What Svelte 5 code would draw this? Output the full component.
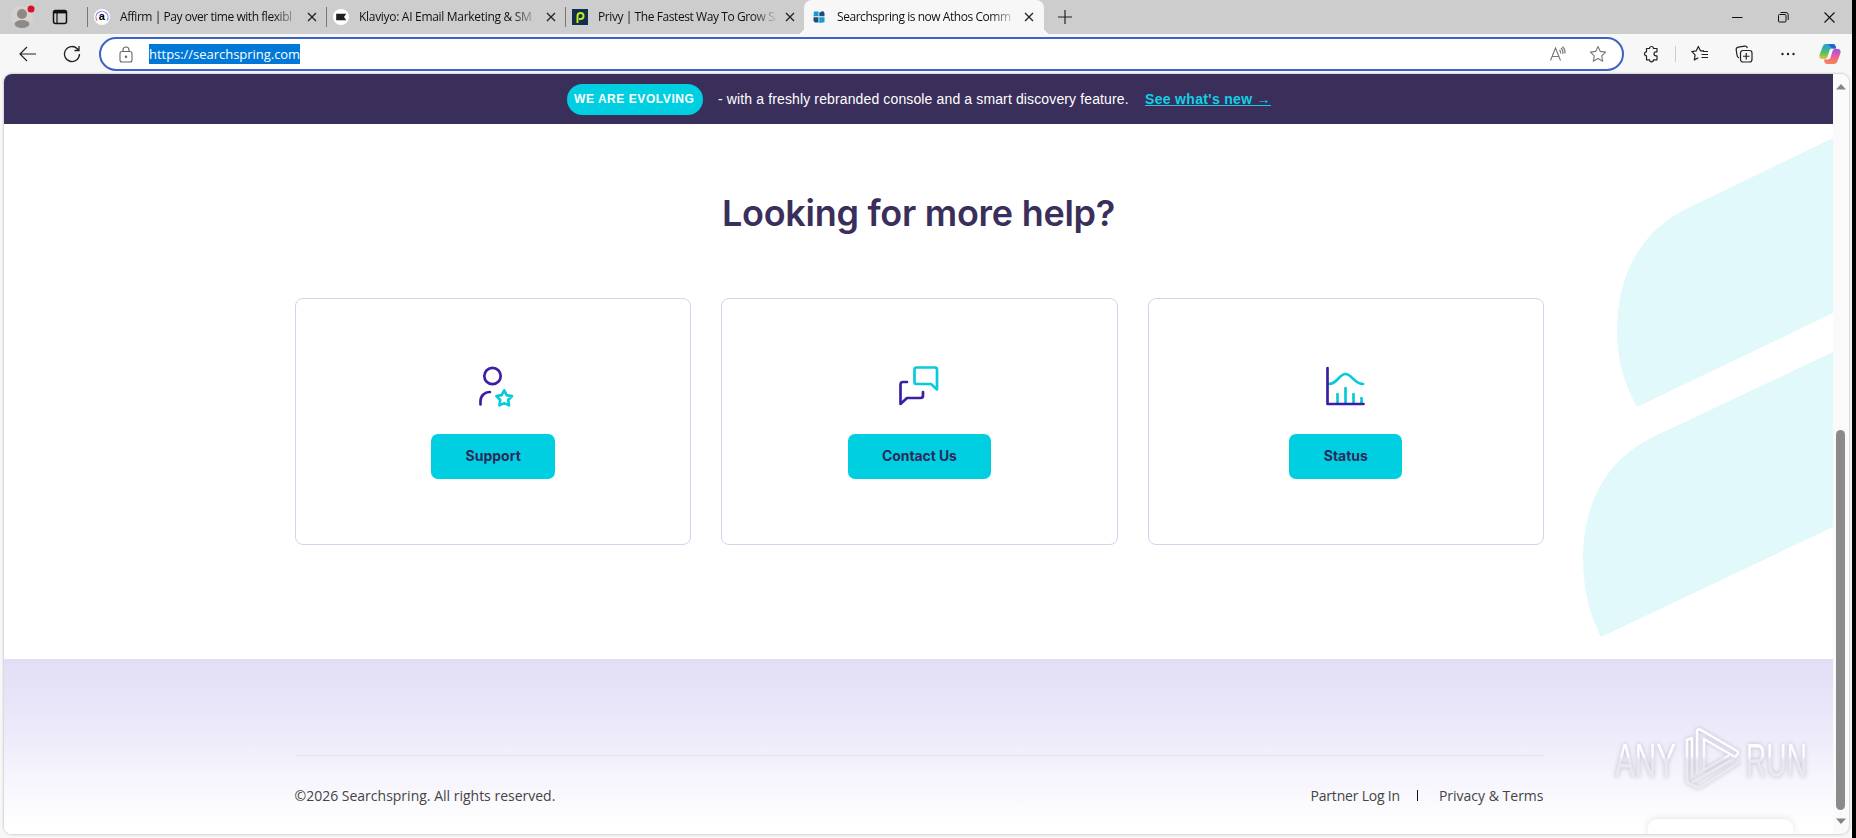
<script lang="ts">
  interface Tab {
    id: string;
    title: string;
    active?: boolean;
  }

  const tabs: Tab[] = [
    { id: "affirm", title: "Affirm | Pay over time with flexibl" },
    { id: "klaviyo", title: "Klaviyo: AI Email Marketing & SM" },
    { id: "privy", title: "Privy | The Fastest Way To Grow Sa" },
    { id: "searchspring", title: "Searchspring is now Athos Comm", active: true },
  ];

  const cards = [
    { id: "support", label: "Support" },
    { id: "contact", label: "Contact Us" },
    { id: "status", label: "Status" },
  ];
</script>

<div class="browser">
  <!-- Tab strip -->
  <header class="tabstrip">
    <div class="profile">
      <svg width="26" height="28" viewBox="0 0 26 28">
        <circle cx="11" cy="14" r="11" fill="#d6d2d0" />
        <circle cx="11" cy="11" r="5" fill="#8f8985" />
        <ellipse cx="11" cy="21" rx="7.5" ry="4" fill="#8f8985" />
        <circle cx="20" cy="6" r="3.5" fill="#d90f24" />
      </svg>
      <svg width="16" height="16" viewBox="0 0 16 16" fill="none" stroke="#111" stroke-width="1.5">
        <rect x="1.5" y="1.5" width="13" height="13" rx="2" />
        <path d="M2 3.2h12" stroke-width="2.4" />
        <path d="M5 4v10" stroke-width="1.2" />
      </svg>
    </div>

    {#each tabs as tab (tab.id)}
      <div class="tab" class:active={tab.active}>
        <span class="favicon">
          {#if tab.id === "affirm"}
            <svg width="16" height="16" viewBox="0 0 16 16">
              <circle cx="8" cy="8" r="8" fill="#fff" />
              <path d="M3 11.500A6 6 0 1 1 13 11.500" fill="none" stroke="#7a7ae8" stroke-width="1.100" />
              <text x="4.700" y="11" class="favicon-a">a</text>
            </svg>
          {:else if tab.id === "klaviyo"}
            <svg width="16" height="16" viewBox="0 0 16 16">
              <circle cx="8" cy="8" r="8" fill="#fff" />
              <path d="M3.200 4.800h10L11 8l2.200 3.200h-10z" fill="#1f1f1f" />
            </svg>
          {:else if tab.id === "privy"}
            <svg width="16" height="16" viewBox="0 0 16 16">
              <rect width="16" height="16" fill="#12304a" />
              <path d="M5.500 14V7A3 3 0 1 1 8.500 10H7" fill="none" stroke="#c3ea1f" stroke-width="2" />
            </svg>
          {:else}
            <svg width="14" height="14" viewBox="0 0 14 14">
              <path d="M2 1.500h4.500v4.700H1.500z" fill="#1299d6" />
              <path d="M7.300 2.500L11 1l1.500 2v3.200H7.300z" fill="#234a7d" />
              <path d="M1.500 7.300h5v5.200H3L1.500 11z" fill="#234a7d" />
              <path d="M7.300 7.300h5.200v5L7.300 13z" fill="#1299d6" />
            </svg>
          {/if}
        </span>
        <span class="tab-title {tab.id}">{tab.title}</span>
        <svg class="tab-close" width="10" height="10" viewBox="0 0 10 10">
          <path d="M1 1l8 8M9 1l-8 8" stroke="#222" stroke-width="1.3" />
        </svg>
      </div>
    {/each}

    <svg class="new-tab" width="14" height="14" viewBox="0 0 14 14">
      <path d="M7 0v14M0 7h14" stroke="#222" stroke-width="1.2" />
    </svg>

    <div class="window-controls">
      <svg width="11" height="11" viewBox="0 0 11 11"><path d="M0 5.500h10.500" stroke="#111" /></svg>
      <svg width="11" height="11" viewBox="0 0 11 11" fill="none" stroke="#111">
        <rect x="0.500" y="2.500" width="7.500" height="7.500" rx="1" />
        <path d="M2.500.5h5.500a2.200 2.200 0 0 1 2.200 2.200v5.300" />
      </svg>
      <svg width="11" height="11" viewBox="0 0 11 11"><path d="M.5.5l10 10M10.500.5l-10 10" stroke="#111" stroke-width="1.100" /></svg>
    </div>
  </header>

  <!-- Toolbar -->
  <div class="toolbar">
    <div class="nav-buttons">
      <svg width="18" height="16" viewBox="0 0 18 16" fill="none" stroke="#222" stroke-width="1.200">
        <path d="M17 8H1.500M8 1L1 8l7 7" />
      </svg>
      <svg width="18" height="18" viewBox="0 0 18 18" fill="none" stroke="#222" stroke-width="1.300">
        <path d="M16.500 9A7.500 7.500 0 1 1 14.300 3.700L16 5.500M16 1v4.500h-4.500" />
      </svg>
    </div>

    <div class="address">
      <svg class="lock" width="14" height="17" viewBox="0 0 14 17" fill="none" stroke="#666" stroke-width="1.100">
        <rect x="1" y="5.500" width="12" height="10.500" rx="2" />
        <path d="M4 5.500V4a3 3 0 0 1 6 0v1.500" />
        <circle cx="7" cy="10.700" r=".7" fill="#555" />
      </svg>
      <span class="url">https://searchspring.com</span>
      <svg class="read-aloud" width="18" height="16" viewBox="0 0 18 16" fill="none" stroke="#777" stroke-width="1.100">
        <path d="M1.500 14.500L6.500 2l5 12.500M3 10.500h7M10.500 4q1.500 1.500 1 3.500M12 2q2.500 2.500 1.800 6M13.500.5q3 3 2.500 7" />
      </svg>
      <svg class="star" width="18" height="18" viewBox="0 0 18 18" fill="none" stroke="#777" stroke-width="1.100" stroke-linejoin="round">
        <path d="M9 1.500l2.300 4.900 5.300.7-3.900 3.700 1 5.400L9 13.600l-4.700 2.600 1-5.400L1.400 7.100l5.300-.7z" />
      </svg>
    </div>

    <div class="tools">
      <svg width="18" height="18" viewBox="0 0 18 18" fill="none" stroke="#222" stroke-width="1.200" stroke-linejoin="round">
        <path d="M4.500 3.500h3a2 2 0 0 1 4 0H15v3.300h-1a2 2 0 0 0 0 4h1v4h-3.500a2 2 0 0 1-4 0h-3v-4a2 2 0 1 1 0-4z" />
      </svg>
      <span class="tools-divider"></span>
      <svg width="18" height="18" viewBox="0 0 18 18" fill="none" stroke="#222" stroke-width="1.200" stroke-linejoin="round">
        <path d="M13 5.800H9.500L7.300 1.500 5.200 5.900.8 6.600l3.300 3.300-.8 5 4-2.200M12 6.500h5M10.500 9.500h6.500M10.500 12.500h6.500" />
      </svg>
      <svg width="18" height="18" viewBox="0 0 18 18" fill="none" stroke="#222" stroke-width="1.200">
        <rect x="5.500" y="5.500" width="11.500" height="11.500" rx="2.500" />
        <path d="M11.250 8v6.500M8 11.250h6.500M4 13l-.8-.6a3 3 0 0 1-1.100-2L1.200 5a2.500 2.500 0 0 1 2-2.800l6.500-1a2.500 2.500 0 0 1 2.700 1.900" />
      </svg>
      <svg width="18" height="18" viewBox="0 0 18 18" fill="#222">
        <circle cx="3.500" cy="9" r="1.200" /><circle cx="9" cy="9" r="1.200" /><circle cx="14.500" cy="9" r="1.200" />
      </svg>
      <svg class="copilot" width="22" height="22" viewBox="0 0 22 22">
        <defs>
          <linearGradient id="cp-left" x1="0" y1="0" x2="0" y2="1">
            <stop offset="0" stop-color="#1c9fe0" /><stop offset=".6" stop-color="#58bd6b" /><stop offset="1" stop-color="#f2c322" />
          </linearGradient>
          <linearGradient id="cp-right" x1="0" y1="0" x2="0" y2="1">
            <stop offset="0" stop-color="#a252e0" /><stop offset=".5" stop-color="#ef5b9c" /><stop offset="1" stop-color="#f58a4b" />
          </linearGradient>
        </defs>
        <path d="M7 1h7q2 0 2.500 2l.7 2.500H13q-2 0-2.600 2L8.500 14q-.6 2-2.500 2H3q-3 0-2.500-4L3.500 4Q4.500 1 7 1z" fill="url(#cp-left)" />
        <path d="M15 21H8q-2 0-2.500-2L5 16.500h4q2 0 2.600-2l1.900-6.500q.6-2 2.500-2h3q3 0 2.500 4l-3 8q-1 3-3.500 3z" fill="url(#cp-right)" />
        <path d="M9 1h5q2 0 2.500 2l.7 2.500H13z" fill="#2264d1" />
      </svg>
    </div>
  </div>

  <!-- Web page -->
  <div class="viewport">
    <div class="page">
      <div class="banner">
        <span class="pill">WE ARE EVOLVING</span>
        <span class="banner-text">- with a freshly rebranded console and a smart discovery feature.</span>
        <a class="banner-link" href="#new">See what's new →</a>
      </div>

      <main class="help">
        <svg class="leaves" width="252" height="500" viewBox="0 0 252 500" fill="#e2f9fb">
          <path d="M252 0L107 70C52 96 36 148 36 193Q36 234 56 269L252 175z" />
          <path d="M252 214L74 298C18 324 2 376 2 421Q2 464 20 499L252 389z" />
        </svg>

        <h1>Looking for more help?</h1>
        <div class="cards">
          {#each cards as card (card.id)}
            <section class="card">
              <svg class="card-icon" width="42" height="42" viewBox="0 0 42 42" fill="none" stroke-width="2.700" stroke-linecap="round" stroke-linejoin="round">
                {#if card.id === "support"}
                  <circle cx="20.500" cy="11" r="8.200" stroke="#3c1fa3" />
                  <path d="M8.500 39.500V36a9 9 0 0 1 9.500-9" stroke="#3c1fa3" />
                  <path d="M32.200 25.300l2.500 4.900 5.300.9-3.800 3.900.8 5.400-4.800-2.300-4.800 2.300.8-5.400-3.800-3.900 5.300-.9z" stroke="#09cbd8" />
                {:else if card.id === "contact"}
                  <path d="M18.500 2.500H37a2 2 0 0 1 2 2V24.500L33 19H18.500a2 2 0 0 1-2-2V4.500a2 2 0 0 1 2-2z" stroke="#09cbd8" />
                  <path d="M9 17H5a2.500 2.500 0 0 0-2.500 2.500V39l6.500-6H22.500a2.500 2.500 0 0 0 2.500-2.500V27" stroke="#3c1fa3" />
                {:else}
                  <path d="M4 19C12.500 19 14 9 20.500 9s8.500 10 17.500 10M12.500 38V29M20.500 38V23M28.500 38V29M36.500 38v-5" stroke="#09cbd8" />
                  <path d="M2.500 3v36h36" stroke="#3c1fa3" />
                {/if}
              </svg>
              <button class="card-button {card.id}">{card.label}</button>
            </section>
          {/each}
        </div>
      </main>

      <footer class="footer">
        <div class="footer-inner">
          <span class="copyright">©2026 Searchspring. All rights reserved.</span>
          <nav class="footer-links">
            <span class="partner">Partner Log In</span>
            <span class="bar"></span>
            <span class="privacy">Privacy &amp; Terms</span>
          </nav>
        </div>
      </footer>

      <div class="chat-popup"></div>
    </div>

    <div class="scrollbar">
      <svg width="10" height="6" viewBox="0 0 10 6"><path d="M0 5.500L5 0l5 5.500z" fill="#858585" /></svg>
      <div class="scroll-track"><div class="scroll-thumb"></div></div>
      <svg width="10" height="6" viewBox="0 0 10 6"><path d="M0 .5L5 6l5-5.500z" fill="#858585" /></svg>
    </div>
  </div>

  <!-- Watermark over the page -->
  <svg class="watermark" width="204" height="70" viewBox="0 0 204 70">
    <defs>
      <linearGradient id="wm" gradientUnits="userSpaceOnUse" x1="0" y1="4" x2="0" y2="64">
        <stop offset="0" stop-color="#fff" />
        <stop offset=".47" stop-color="#fcfbff" />
        <stop offset=".53" stop-color="#e9e8ef" />
        <stop offset="1" stop-color="#ebeaf0" />
      </linearGradient>
    </defs>
    <text x="3" y="53" textLength="61" lengthAdjust="spacingAndGlyphs">ANY</text>
    <text x="134" y="53" textLength="61" lengthAdjust="spacingAndGlyphs">RUN</text>
    <g fill="none" stroke="url(#wm)" stroke-width="2.600" stroke-linejoin="round" stroke-linecap="round">
      <path d="M85 49V7q1-3 4-1l36 21q2 2 0 4l-2 2-31-18v31l24-14" />
      <path d="M126 36v3L90 62q-3 2-6 1l-9-5V16l5-2v39M81 58l37-21" />
    </g>
  </svg>
</div>

<style>
  :global(body) {
    margin: 0;
    background: #000;
  }

  .browser {
    position: relative;
    box-sizing: border-box;
    width: 1856px;
    height: 838px;
    overflow: hidden;
    display: flex;
    flex-direction: column;
    background: #f7f7f7;
    border-right: 4px solid #000;
    font-family: "Open Sans", "Noto Sans", sans-serif;
  }

  svg {
    display: block;
    flex: none;
  }

  /* Tab strip */
  .tabstrip {
    flex: none;
    height: 34px;
    display: flex;
    align-items: center;
    background: #cdcdcd;
  }

  .profile {
    box-sizing: border-box;
    width: 87px;
    height: 34px;
    display: flex;
    align-items: center;
    gap: 15px;
    padding-left: 11px;
  }

  .tab {
    box-sizing: border-box;
    width: 239px;
    height: 20px;
    display: flex;
    align-items: center;
    padding-left: 5px;
    border-left: 1px solid #777;
  }

  .tab.active {
    position: relative;
    width: 240px;
    height: 34px;
    padding-left: 6px;
    border-left: 0;
    border-radius: 8px 8px 0 0;
    background: #f7f7f7;
  }

  .tab.active::before,
  .tab.active::after {
    content: "";
    position: absolute;
    bottom: 0;
    width: 7px;
    height: 7px;
  }

  .tab.active::before {
    left: -7px;
    background: radial-gradient(circle at 0 0, transparent 7px, #f7f7f7 7px);
  }

  .tab.active::after {
    right: -7px;
    background: radial-gradient(circle at 100% 0, transparent 7px, #f7f7f7 7px);
  }

  .favicon {
    width: 18px;
    display: flex;
    justify-content: center;
  }

  .favicon-a {
    font: bold 11px "Liberation Sans", sans-serif;
  }

  .tab-title {
    width: 178px;
    margin-left: 9px;
    white-space: nowrap;
    font-size: 12px;
    line-height: 18px;
    letter-spacing: -0.45px;
    color: #111;
    mask-image: linear-gradient(to right, #000 154px, transparent 180px);
  }

  .tab-title.klaviyo {
    letter-spacing: -0.3px;
  }

  .tab-title.privy {
    letter-spacing: -0.42px;
  }

  .tab-close {
    margin-left: 9px;
  }

  .tab.active .tab-close {
    margin-left: 9px;
  }

  .new-tab {
    margin-left: 14px;
  }

  .window-controls {
    display: flex;
    gap: 35px;
    margin-left: auto;
    margin-right: 17px;
  }

  /* Toolbar */
  .toolbar {
    flex: none;
    height: 40px;
    display: flex;
    align-items: center;
  }

  .nav-buttons {
    box-sizing: border-box;
    width: 99px;
    display: flex;
    align-items: center;
    gap: 26px;
    padding-left: 19px;
  }

  .address {
    box-sizing: border-box;
    width: 1525px;
    height: 34px;
    display: flex;
    align-items: center;
    padding: 0 15px 0 18px;
    border: 2px solid #3b63c6;
    border-radius: 17px;
    background: #fff;
  }

  .url {
    margin-left: 16px;
    font-size: 13px;
    line-height: 20px;
    letter-spacing: -0.03px;
    color: #fff;
    background: #0078d7;
  }

  .read-aloud {
    margin-left: auto;
  }

  .star {
    margin-left: 22px;
  }

  .tools {
    flex: 1;
    display: flex;
    align-items: center;
    padding-left: 18px;
    gap: 26px;
  }

  .tools-divider {
    width: 1px;
    height: 16px;
    margin: 0 -11px;
    background: #ccc;
  }

  .copilot {
    margin-left: -4px;
  }

  /* Page */
  .viewport {
    box-sizing: border-box;
    width: 1845px;
    height: 760px;
    margin-left: 4px;
    display: flex;
    overflow: hidden;
    border-radius: 8px;
    background: #fafafa;
    box-shadow: 0 0 2px 1px #d2d2d2;
  }

  .page {
    position: relative;
    width: 1829px;
    overflow: hidden;
    display: flex;
    flex-direction: column;
    background: #fff;
  }

  .banner {
    flex: none;
    height: 50px;
    display: flex;
    align-items: center;
    padding-left: 563px;
    background: #3a2f5b;
    color: #fff;
    font-family: "Liberation Sans", Arial, sans-serif;
    font-size: 14px;
    white-space: nowrap;
  }

  .pill {
    box-sizing: border-box;
    width: 136px;
    padding: 0 0 0 7px;
    border-radius: 16px;
    background: #00cfe2;
    font-size: 12px;
    font-weight: bold;
    line-height: 31px;
    letter-spacing: 0.56px;
  }

  .banner-text {
    width: 412px;
    margin-left: 15px;
    letter-spacing: 0.13px;
  }

  .banner-link {
    margin-left: 15px;
    color: #12d0e4;
    font-weight: bold;
    letter-spacing: 0.32px;
  }

  .help {
    position: relative;
    flex: none;
    height: 535px;
    display: flex;
    flex-direction: column;
    align-items: center;
  }

  .leaves {
    position: absolute;
    top: 14px;
    right: 0;
  }

  h1 {
    margin: 66px 0 0;
    font-family: Inter, sans-serif;
    font-size: 36px;
    font-weight: 600;
    line-height: 46px;
    letter-spacing: -0.27px;
    color: #3a2f5b;
  }

  .cards {
    width: 1249px;
    display: grid;
    grid-template-columns: repeat(3, 1fr);
    gap: 30px;
    margin-top: 62px;
    margin-left: 2px;
  }

  .card {
    box-sizing: border-box;
    height: 247px;
    display: flex;
    flex-direction: column;
    align-items: center;
    padding-top: 66px;
    border: 1px solid #d5d3e9;
    border-radius: 8px;
    background: #fff;
  }

  .card-button {
    height: 45px;
    margin-top: 27px;
    padding: 0 0 2px;
    border: 0;
    border-radius: 7px;
    background: #00cfe2;
    color: #2c2a5c;
    font-family: Inter, sans-serif;
    font-size: 14px;
    font-weight: 700;
  }

  .card-button.support {
    width: 124px;
  }

  .card-button.contact {
    width: 143px;
    letter-spacing: -0.1px;
  }

  .card-button.status {
    width: 113px;
  }

  .footer {
    flex: 1;
    display: flex;
    justify-content: center;
    padding-top: 96px;
    background: linear-gradient(#e2def7, #e9e6f9 30%, #f5f3fc 65%, #fff 96%);
  }

  .footer-inner {
    width: 1249px;
    height: 79px;
    box-sizing: border-box;
    display: flex;
    justify-content: space-between;
    align-items: center;
    margin-left: 1px;
    border-top: 1px solid #e3e0ee;
    color: #444;
    font-size: 14px;
  }

  .footer-links {
    display: flex;
    align-items: center;
  }

  .partner {
    letter-spacing: -0.2px;
  }

  .bar {
    width: 1px;
    height: 11px;
    margin: 0 21px 0 17px;
    background: #111;
  }

  .chat-popup {
    position: absolute;
    left: 1644px;
    bottom: 0;
    width: 145px;
    height: 15px;
    border-radius: 9px 9px 0 0;
    background: #fff;
    box-shadow: 0 0 9px rgba(0, 0, 0, 0.12);
  }

  /* Scrollbar */
  .scrollbar {
    width: 15px;
    box-sizing: border-box;
    display: flex;
    flex-direction: column;
    align-items: center;
    padding: 10px 0;
  }

  .scroll-track {
    flex: 1;
    display: flex;
    flex-direction: column;
    justify-content: flex-end;
    padding-bottom: 8px;
  }

  .scroll-thumb {
    width: 9px;
    height: 380px;
    border-radius: 5px;
    background: #8b8b8b;
  }

  .watermark {
    position: absolute;
    left: 1612px;
    top: 724px;
    filter: drop-shadow(0 0 2px rgba(110, 105, 130, 0.4));
  }

  .watermark text {
    font: 48px "Liberation Sans", sans-serif;
    fill: url(#wm);
  }
</style>
